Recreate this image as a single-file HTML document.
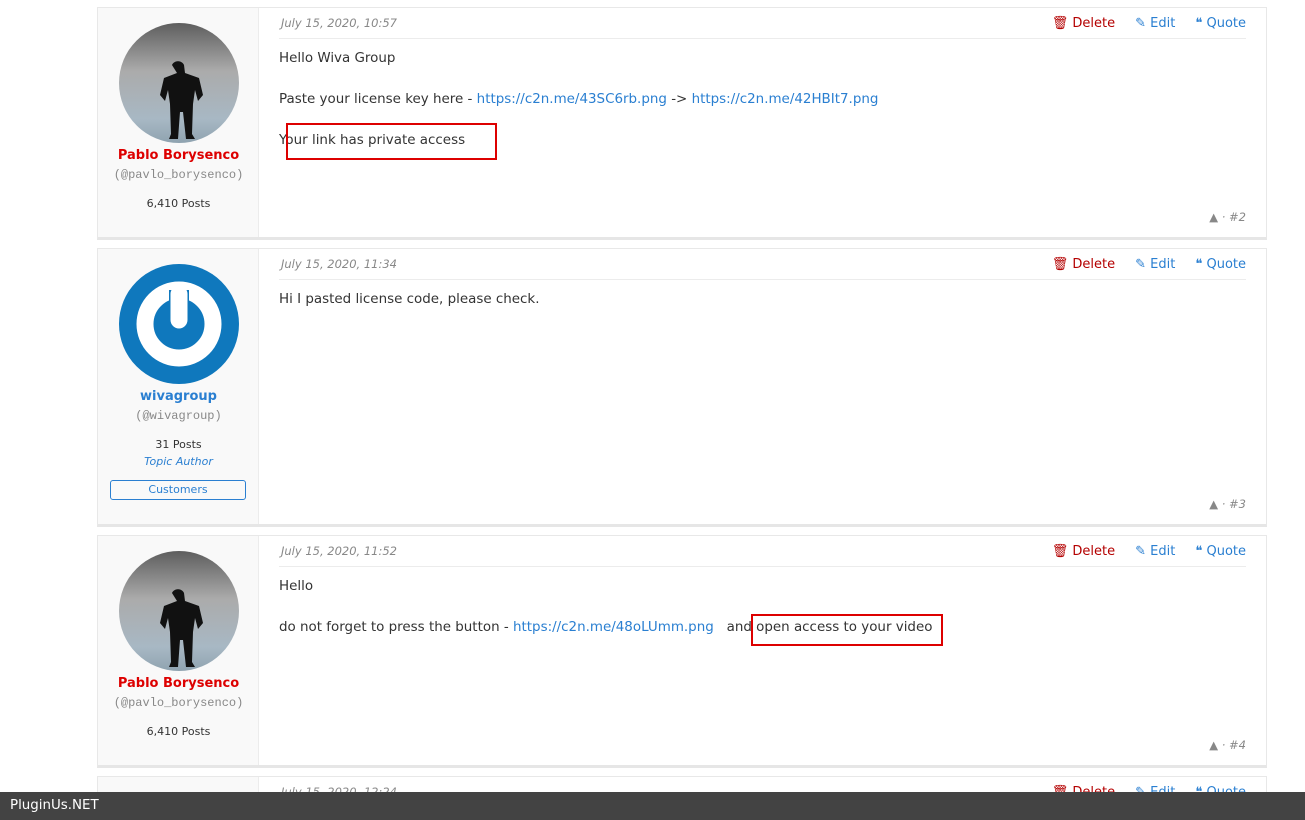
<!DOCTYPE html>
<html><head><style>
*{margin:0;padding:0;box-sizing:border-box}
html,body{width:1305px;height:820px;overflow:hidden}
body{background:#fff;font-family:"DejaVu Sans","Liberation Sans",sans-serif;font-size:13px;color:#333;position:relative}
.post{position:absolute;left:97px;width:1170px;border:1px solid #e8e8e8;border-bottom:3px solid #e6e6e6;background:#fff}
.left{position:absolute;left:0;top:0;bottom:0;width:161px;background:#f9f9f9;border-right:1px solid #ececec}
.av{position:absolute;left:21px;top:15px;width:120px;height:120px;border-radius:50%;overflow:hidden}
.nm{position:absolute;left:0;width:161px;text-align:center;font-weight:bold;font-size:13px}
.hd{position:absolute;left:0;width:161px;text-align:center;font-family:"Liberation Mono",monospace;color:#888;font-size:12px}
.ps{position:absolute;left:0;width:161px;text-align:center;font-size:11px;color:#333}
.date{position:absolute;left:183px;top:8px;font-style:italic;color:#888;font-size:11.5px}
.sep{position:absolute;left:181px;width:967px;top:30px;border-top:1px solid #ececec}
.act{position:absolute;top:8px;right:20px;font-size:13px;color:#2a7fd1;white-space:nowrap}
.act span{margin-left:20px}
.del{color:#b40000}
.t{position:absolute;left:181px;font-size:13.45px;color:#333}
a{color:#2a7fd1;text-decoration:none}
.num{position:absolute;right:20px;font-size:11.5px;color:#888;font-style:italic}
.box{position:absolute;border:2px solid #d00}
</style></head><body>
<svg width="0" height="0" style="position:absolute"><defs><linearGradient id="g1" x1="0" y1="0" x2="0" y2="1"><stop offset="0" stop-color="#5e5e5e"/><stop offset=".4" stop-color="#ababab"/><stop offset=".8" stop-color="#a8b8c4"/><stop offset="1" stop-color="#8fa3b0"/></linearGradient></defs></svg>

<div class="post" style="top:7px;height:233px">
<div class="left">
<div class="av"><svg width="120" height="120"><rect width="120" height="120" fill="url(#g1)"/><path d="M53 42c2-5 10-5 12 0l1 8 14 5 4 17-5 6-3-11-2 14-1 30 3 5h-9l-3-27h-3l-2 27h-9l2-5-1-30-2-14-3 11-5-6 4-17 13-5z" fill="#111"/></svg></div>
<div class="nm" style="top:140px;color:#d00">Pablo Borysenco</div>
<div class="hd" style="top:160px">(@pavlo_borysenco)</div>
<div class="ps" style="top:189px">6,410 Posts</div>
</div>
<div class="date">July 15, 2020, 10:57</div>
<div class="act"><span class="del">🗑 Delete</span><span>✎ Edit</span><span>❝ Quote</span></div>
<div class="sep"></div>
<div class="t" style="top:43px">Hello Wiva Group</div>
<div class="t" style="top:84px">Paste your license key here - <a>https://c2n.me/43SC6rb.png</a> -&gt; <a>https://c2n.me/42HBIt7.png</a></div>
<div class="t" style="top:125px">Your link has private access</div>
<div class="num" style="top:202px">▲ · #2</div>
</div>
<div class="box" style="left:286px;top:123px;width:211px;height:37px"></div>

<div class="post" style="top:248px;height:279px">
<div class="left">
<div class="av" style="background:#0f78bd"><svg width="120" height="120"><circle cx="60" cy="60" r="34" fill="none" stroke="#fff" stroke-width="17"/><path d="M60 26v30" stroke="#0f78bd" stroke-width="20"/><path d="M60 30v26" stroke="#fff" stroke-width="17" stroke-linecap="round"/></svg></div>
<div class="nm" style="top:140px;color:#2a7fd1">wivagroup</div>
<div class="hd" style="top:160px">(@wivagroup)</div>
<div class="ps" style="top:189px">31 Posts</div>
<div class="ps" style="top:206px;color:#2a7fd1;font-style:italic">Topic Author</div>
<div style="position:absolute;left:12px;top:231px;width:136px;height:20px;border:1px solid #2a7fd1;border-radius:3px;text-align:center;font-size:11px;color:#2a7fd1;line-height:18px">Customers</div>
</div>
<div class="date">July 15, 2020, 11:34</div>
<div class="act"><span class="del">🗑 Delete</span><span>✎ Edit</span><span>❝ Quote</span></div>
<div class="sep"></div>
<div class="t" style="top:43px">Hi I pasted license code, please check.</div>
<div class="num" style="top:248px">▲ · #3</div>
</div>

<div class="post" style="top:535px;height:233px">
<div class="left">
<div class="av"><svg width="120" height="120"><rect width="120" height="120" fill="url(#g1)"/><path d="M53 42c2-5 10-5 12 0l1 8 14 5 4 17-5 6-3-11-2 14-1 30 3 5h-9l-3-27h-3l-2 27h-9l2-5-1-30-2-14-3 11-5-6 4-17 13-5z" fill="#111"/></svg></div>
<div class="nm" style="top:140px;color:#d00">Pablo Borysenco</div>
<div class="hd" style="top:160px">(@pavlo_borysenco)</div>
<div class="ps" style="top:189px">6,410 Posts</div>
</div>
<div class="date">July 15, 2020, 11:52</div>
<div class="act"><span class="del">🗑 Delete</span><span>✎ Edit</span><span>❝ Quote</span></div>
<div class="sep"></div>
<div class="t" style="top:43px">Hello</div>
<div class="t" style="top:84px">do not forget to press the button - <a>https://c2n.me/48oLUmm.png</a> &nbsp; and open access to your video</div>
<div class="num" style="top:202px">▲ · #4</div>
</div>
<div class="box" style="left:751px;top:614px;width:192px;height:32px"></div>

<div class="post" style="top:776px;height:44px;border-bottom:none">
<div class="left"></div>
<div class="date">July 15, 2020, 12:24</div>
<div class="act"><span class="del">🗑 Delete</span><span>✎ Edit</span><span>❝ Quote</span></div>
</div>

<div style="position:absolute;left:0;top:792px;width:1305px;height:28px;background:#434343;color:#fff;font-size:13.4px;padding:6px 0 0 10px">PluginUs.NET</div>
</body></html>
